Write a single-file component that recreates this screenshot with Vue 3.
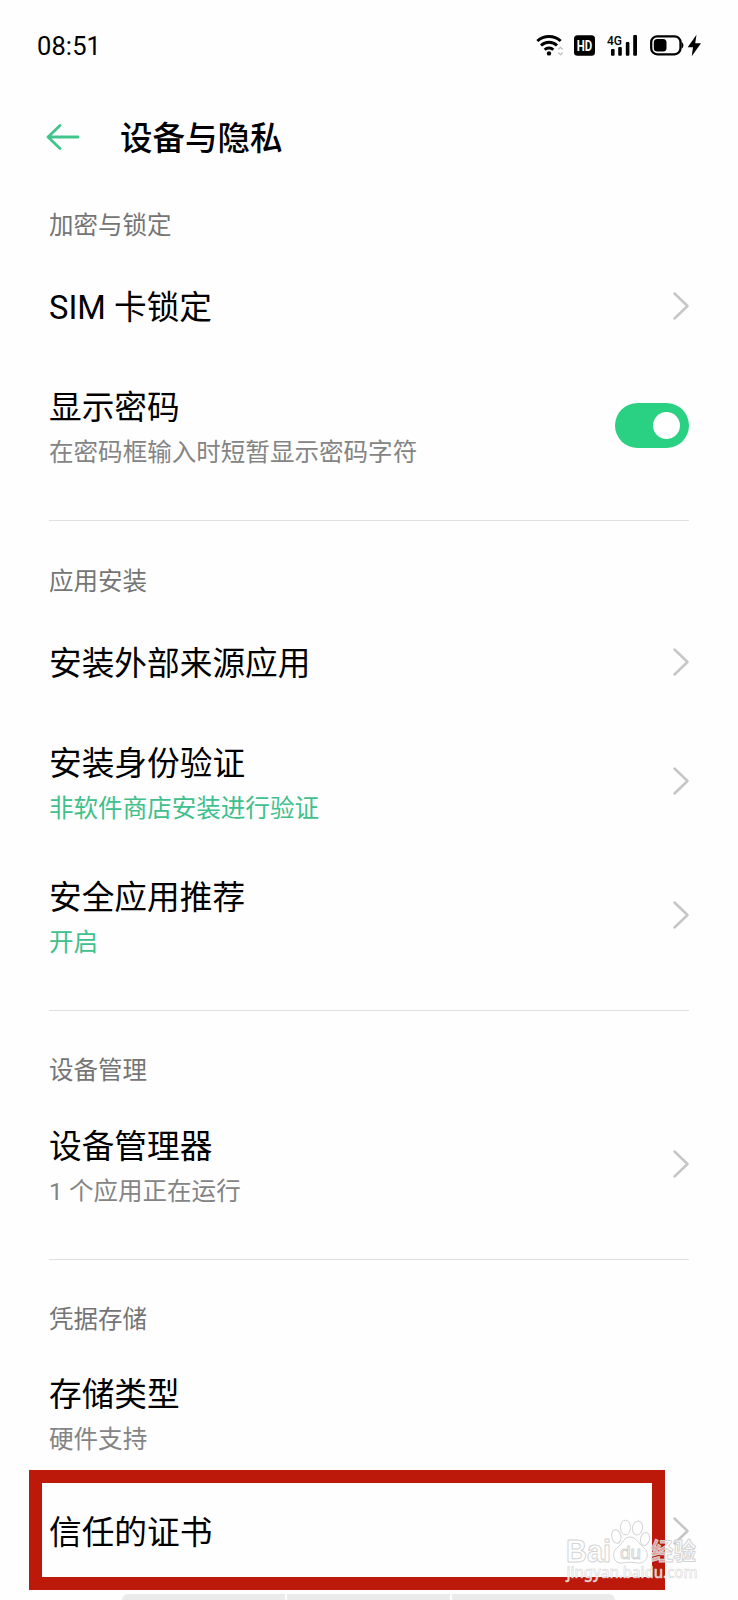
<template>
    <div class="screen">
        <header class="status">
            <span class="time">08:51</span>
            <svg class="status-icons" viewBox="0 0 172 26" width="172" height="26">
                <g fill="none" stroke="#000" stroke-width="2.9">
                    <path d="M1.3 8a17.500 17.500 0 0 1 23.400 0" />
                    <path d="M5 12.500a11.600 11.600 0 0 1 16 0" />
                    <path d="M8.700 16.800a6 6 0 0 1 8.600 0" />
                </g>
                <circle cx="13" cy="20.4" r="2.2" />
                <path d="M22.200 16.500l2.300-2.300 2.300 2.300M22.200 19.500l2.300 2.300 2.300-2.300" fill="none" stroke="#c4c4c4" stroke-width="1.3" />
                <rect x="38" y="2.200" width="21" height="20.500" rx="3.500" />
                <text x="48.500" y="18.200" class="hd" textLength="15.500" lengthAdjust="spacingAndGlyphs">HD</text>
                <text x="71" y="12" class="net" textLength="15" lengthAdjust="spacingAndGlyphs">4G</text>
                <rect x="75" y="16" width="3.600" height="6.700" rx="1" />
                <rect x="82.200" y="14" width="3.600" height="8.700" rx="1" />
                <rect x="89.800" y="9" width="3.600" height="13.700" rx="1" />
                <rect x="97.200" y="2" width="3.800" height="20.700" rx="1" />
                <rect x="115.200" y="3.300" width="29.300" height="18" rx="6" fill="none" stroke="#000" stroke-width="2.300" />
                <path d="M145.500 8.500q4 3.800 0 7.600z" />
                <rect x="117.800" y="6" width="12.700" height="12.600" rx="3.500" />
                <path d="M160.500 1.800l-8.800 12.400h5.300l-1.300 9 9.300-12.900h-5.800z" />
            </svg>
        </header>

        <nav class="header">
            <svg class="back" viewBox="0 0 34 28" width="34" height="28">
                <path d="M14 2.5L2 14l12 11.500M2 14h30" />
            </svg>
            <h1>设备与隐私</h1>
        </nav>

        <section
            v-for="section in sections"
            :key="section.label"
            :class="['section', { compact: section.compact }]"
        >
            <h2>{{ section.label }}</h2>
            <div
                v-for="item in section.items"
                :key="item.title"
                :class="['row', { double: item.note }]"
            >
                <div class="text">
                    <div class="title">{{ item.title }}</div>
                    <div v-if="item.note" :class="['note', { green: item.green }]">{{ item.note }}</div>
                </div>
                <button
                    v-if="item.toggle"
                    :class="['switch', { on: showPassword }]"
                    @click="showPassword = !showPassword"
                >
                    <span class="knob"></span>
                </button>
                <svg v-else-if="!item.plain" class="chevron" viewBox="0 0 18 28" width="18" height="28">
                    <path d="M3.500 1.500L16.500 14l-13 12.500" />
                </svg>
            </div>
        </section>

        <div class="highlight"></div>
        <div class="dock"><span></span><span></span><span></span></div>

        <svg class="watermark" viewBox="0 0 150 80" width="150" height="80">
            <g class="outline">
                <text x="6" y="51.500" font-size="31" textLength="45" lengthAdjust="spacingAndGlyphs">Bai</text>
                <ellipse cx="56.300" cy="26.500" rx="4.600" ry="6.800" transform="rotate(-12 56.300 26.500)" />
                <ellipse cx="65.500" cy="17.500" rx="5" ry="7.300" />
                <ellipse cx="77.500" cy="18" rx="5" ry="7" transform="rotate(10 77.500 18)" />
                <ellipse cx="85" cy="29" rx="4.500" ry="6.500" transform="rotate(15 85 29)" />
                <path d="M70 27c-6 0-7 6-12 10-8 6-4 17 4 16 6-1 10-1 16 0 9 1 13-10 5-16-5-4-7-10-13-10z" />
                <text x="60" y="48.500" font-size="19" font-weight="400" textLength="21" lengthAdjust="spacingAndGlyphs">du</text>
                <text x="91" y="50" font-size="24" textLength="45" lengthAdjust="spacingAndGlyphs">经验</text>
            </g>
            <text x="6.500" y="67.500" class="site" textLength="131" lengthAdjust="spacingAndGlyphs">jingyan.baidu.com</text>
        </svg>
    </div>
</template>

<script setup>
import { ref } from 'vue';

const showPassword = ref(true);

const sections = [
    {
        label: '加密与锁定',
        items: [
            { title: 'SIM 卡锁定' },
            { title: '显示密码', note: '在密码框输入时短暂显示密码字符', toggle: true },
        ],
    },
    {
        label: '应用安装',
        items: [
            { title: '安装外部来源应用' },
            { title: '安装身份验证', note: '非软件商店安装进行验证', green: true },
            { title: '安全应用推荐', note: '开启', green: true },
        ],
    },
    {
        label: '设备管理',
        compact: true,
        items: [
            { title: '设备管理器', note: '1 个应用正在运行' },
        ],
    },
    {
        label: '凭据存储',
        compact: true,
        items: [
            { title: '存储类型', note: '硬件支持', plain: true },
            { title: '信任的证书' },
        ],
    },
];
</script>

<style>
body {
    margin: 0;
    background: #fefefe;
}
</style>

<style scoped>
.screen {
    position: relative;
    box-sizing: border-box;
    width: 738px;
    height: 1600px;
    overflow: hidden;
    background: #fefefe;
    color: #000;
    font-family: Roboto, "Noto Sans CJK SC", sans-serif;
}
.status {
    display: flex;
    align-items: center;
    justify-content: space-between;
    box-sizing: border-box;
    height: 90px;
    padding: 1px 30px 0 37px;
}
.time {
    font-size: 25.5px;
    letter-spacing: 0.1px;
}
.hd {
    fill: #fff;
    font-size: 15.5px;
    font-weight: 700;
    text-anchor: middle;
}
.net {
    font-size: 13.5px;
    font-weight: 500;
}
.header {
    display: flex;
    align-items: center;
    box-sizing: border-box;
    height: 75px;
    padding: 19px 49px 0 46px;
}
.header h1 {
    margin: 3px 0 0 40px;
    font-size: 32.5px;
    line-height: 48px;
    font-weight: 500;
}
.back {
    fill: none;
    stroke: #42c58d;
    stroke-width: 2.8;
    stroke-linecap: round;
    stroke-linejoin: round;
}
.section {
    margin: 0 49px;
}
.section + .section {
    margin-top: 28px;
    border-top: 1px solid #e0e0e0;
}
.section h2 {
    box-sizing: border-box;
    height: 89px;
    margin: 0;
    padding-top: 43px;
    color: #757575;
    font-size: 24.5px;
    line-height: 36px;
    font-weight: 400;
}
.section.compact h2 {
    height: 85.5px;
    padding-top: 42px;
}
.row {
    display: flex;
    align-items: center;
    justify-content: space-between;
    height: 104px;
}
.row.double {
    height: 134px;
}
.title {
    padding-top: 4px;
    font-size: 32.7px;
    line-height: 45px;
}
.double .text {
    padding-top: 9px;
}
.double .title {
    padding-top: 2px;
}
.note {
    color: #848484;
    font-size: 24.55px;
    line-height: 44px;
    font-weight: 400;
}
.note.green {
    color: #3fc08c;
}
.chevron {
    flex: none;
    fill: none;
    stroke: #c6c6c6;
    stroke-width: 2.5;
    stroke-linecap: round;
    stroke-linejoin: round;
}
.switch {
    display: flex;
    align-items: center;
    box-sizing: border-box;
    width: 74px;
    height: 45px;
    padding: 0 9px;
    border: none;
    border-radius: 23px;
    background: #d5d5d5;
}
.switch.on {
    justify-content: flex-end;
    background: #2bd182;
}
.knob {
    width: 27px;
    height: 27px;
    border-radius: 50%;
    background: #fff;
}
.highlight {
    position: absolute;
    left: 29px;
    top: 1470px;
    box-sizing: border-box;
    width: 636px;
    height: 120px;
    border: 13.5px solid #bd190b;
}
.dock {
    position: absolute;
    left: 122px;
    top: 1594px;
    display: flex;
    gap: 2px;
    width: 493px;
    height: 6px;
    overflow: hidden;
    border-radius: 6px 6px 0 0;
}
.dock span {
    flex: 1;
    background: #ebebeb;
}
.watermark {
    position: absolute;
    left: 560px;
    top: 1510px;
}
.outline {
    fill: rgba(255, 255, 255, 0.6);
    stroke: #d4d4d4;
    stroke-width: 1;
    font-family: "Liberation Sans", "Noto Sans CJK SC", sans-serif;
    font-weight: 700;
}
.site {
    fill: rgba(255, 255, 255, 0.85);
    stroke: #d0d0d0;
    stroke-width: 0.5;
    font-family: "Noto Sans", sans-serif;
    font-size: 16px;
    font-weight: 500;
}
</style>
